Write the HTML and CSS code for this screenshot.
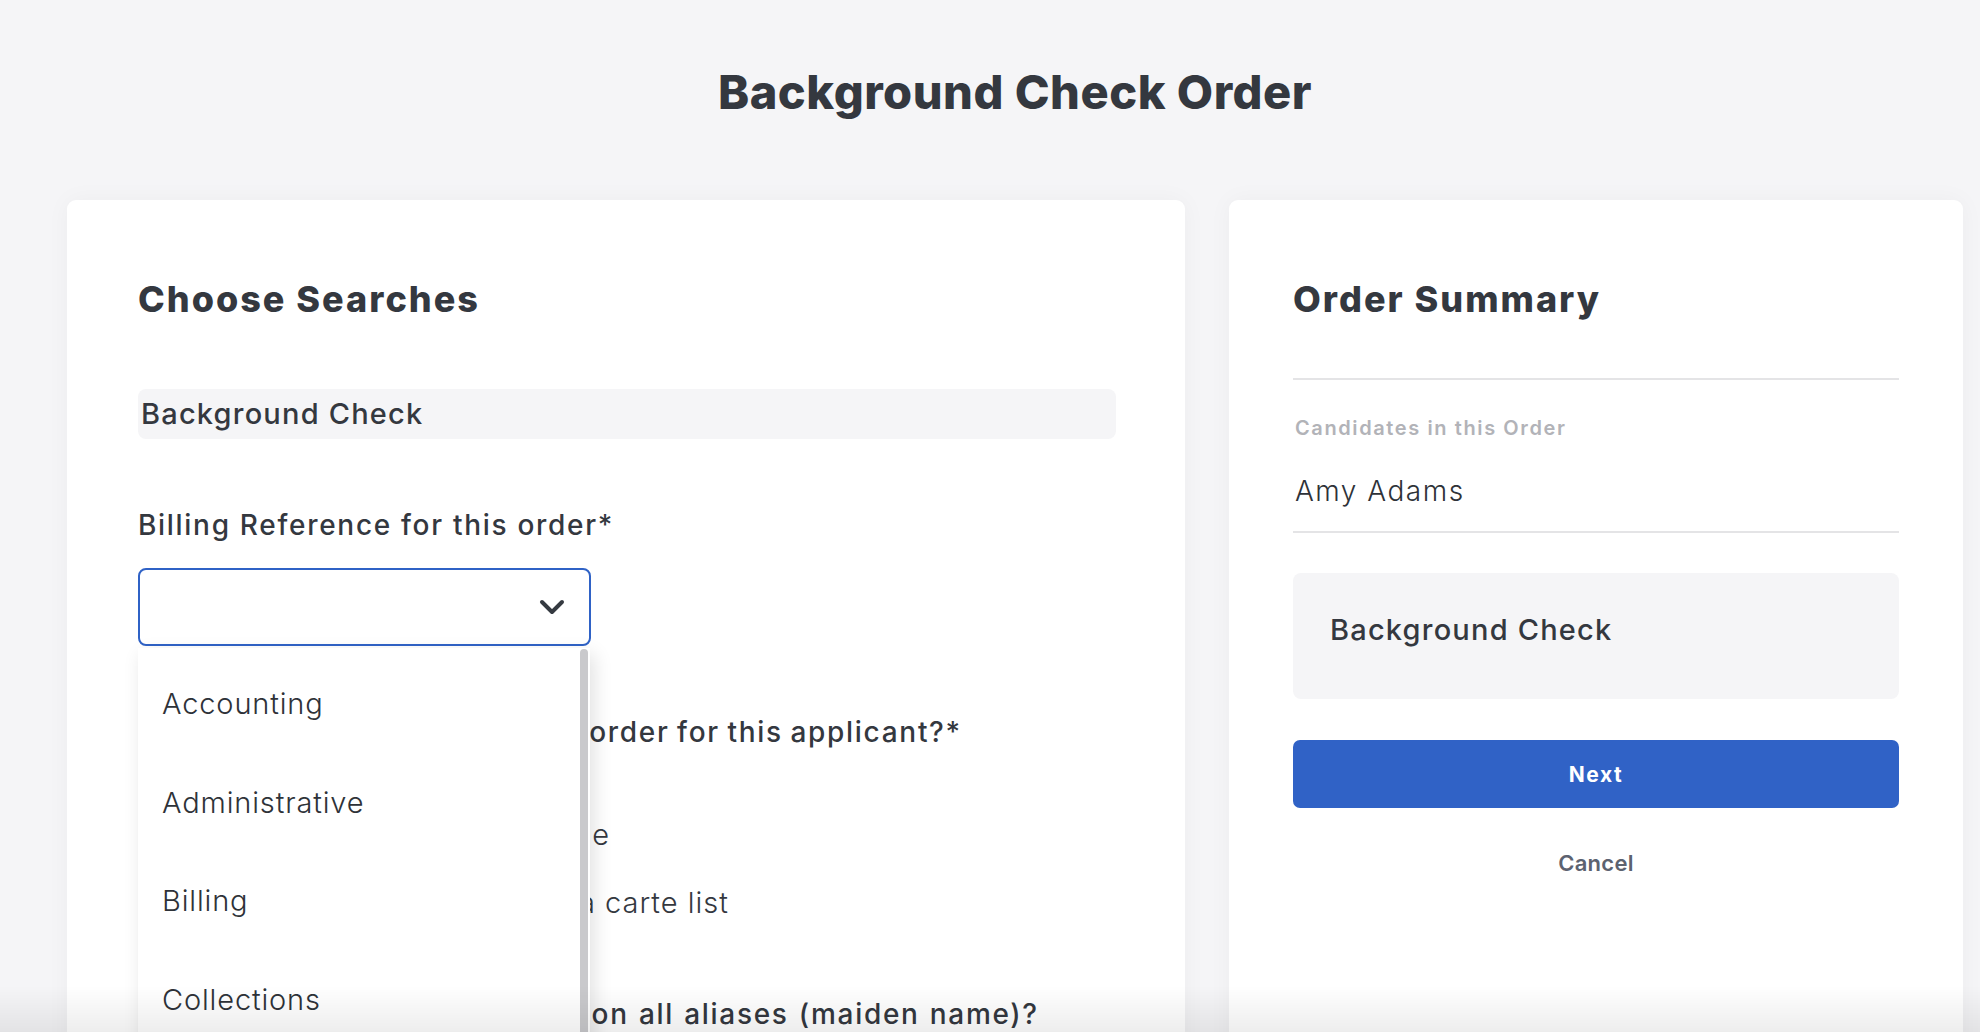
FILE: index.html
```html
<!DOCTYPE html>
<html lang="en">
<head>
    <meta charset="UTF-8">
    <meta name="viewport" content="width=device-width, initial-scale=1.0">
    <title>Background Check Order</title>
    <link rel="stylesheet" href="styles.css">
</head>
<body>

    <div class="page">
        <h1 class="page-title">Background Check Order</h1>

        <div class="layout">
            <section class="card searches">
                <h2 class="card-title">Choose Searches</h2>

                <div class="search-tag">Background Check</div>

                <div class="field">
                    <label class="field-label">Billing Reference for this order*</label>
                    <div class="select-wrap">
                        <div class="select">
                            <svg class="chevron" width="26" height="16" viewBox="0 0 26 16">
                                <polyline points="3,3 13,13 23,3" fill="none" stroke="#353a41" stroke-width="4" stroke-linecap="round" stroke-linejoin="round"/>
                            </svg>
                        </div>
                        <ul class="dropdown">
                            <li>Accounting</li>
                            <li>Administrative</li>
                            <li>Billing</li>
                            <li>Collections</li>
                            <li>Customer Service</li>
                        </ul>
                    </div>
                </div>

                <div class="field order-type">
                    <p class="field-label">How would you like to start an order for this applicant?*</p>
                    <label class="radio"><span class="radio-dot"></span>Order a predefined package</label>
                    <label class="radio"><span class="radio-dot"></span>Pick searches from the à la carte list</label>
                </div>

                <div class="field aliases">
                    <p class="field-label">Would you like to also search on all aliases (maiden name)?</p>
                </div>
            </section>

            <aside class="card summary">
                <h2 class="card-title">Order Summary</h2>
                <hr class="divider first">
                <div class="summary-label">Candidates in this Order</div>
                <div class="candidate">Amy Adams</div>
                <hr class="divider">
                <div class="summary-item">Background Check</div>
                <button class="btn-next">Next</button>
                <a class="cancel" href="#">Cancel</a>
            </aside>
        </div>
    </div>

    <div class="bottom-shade"></div>

</body>
</html>
```

FILE: styles.css
```css
html, body { margin: 0; height: 100%; overflow: hidden; }
body { font-family: Inter, Lato, sans-serif; background-color: #f5f5f7; color: #34383f; }

.page { padding: 62px 17px 0 67px; }
.page-title { margin: 0; font-size: 47px; line-height: 60px; font-weight: 800; letter-spacing: 0.5px; text-align: center; }

.layout { display: grid; grid-template-columns: 1118px 734px; gap: 44px; margin-top: 78px; }
.card { background-color: #fff; border-radius: 9px; box-shadow: 0 0 24px rgba(30, 30, 60, 0.04); min-height: 1000px; box-sizing: border-box; }
.searches { padding: 77px 69px 0 71px; }
.summary { padding: 77px 64px 0 64px; }

.card-title { margin: 0; font-size: 36px; line-height: 44px; font-weight: 800; letter-spacing: 2px; }

.search-tag { margin-top: 68px; height: 50px; line-height: 50px; padding: 0 3px; font-size: 29px; font-weight: 500; letter-spacing: 1.2px; background-color: #f5f5f7; border-radius: 8px; }

.field { margin-top: 68px; }
.field-label { display: block; margin: 0; font-size: 28px; line-height: 36px; font-weight: 500; letter-spacing: 1.7px; }

.select-wrap { position: relative; width: 453px; margin-top: 25px; }
.select { height: 78px; box-sizing: border-box; border: 2px solid #2f62c6; border-radius: 8px; display: flex; align-items: center; justify-content: flex-end; padding-right: 24px; }
.chevron { display: block; }

/* open list of the billing select */
.dropdown { position: absolute; top: 80px; left: 0; width: 452px; height: 420px; margin: 0; padding: 7px 0 0; list-style: none; background-color: #fff; box-shadow: 4px 6px 18px rgba(0, 0, 0, 0.12); z-index: 2; overflow: hidden; }
.dropdown li { padding-left: 24px; font-size: 29px; line-height: 98.7px; font-weight: 300; letter-spacing: 0.85px; color: #2e3238; }
.dropdown::after { content: ""; position: absolute; top: 1px; right: 2px; width: 8px; height: 100%; border-radius: 4px; background-color: #c9c9cc; }

.order-type .field-label { word-spacing: -1.5px; }
.order-type .radio { display: flex; align-items: center; gap: 41px; font-size: 29px; line-height: 36px; font-weight: 300; letter-spacing: 1px; margin-top: 32px; }
.order-type .field-label + .radio { margin-top: 67px; }
.radio-dot { width: 22px; height: 22px; border: 2px solid #8a8e96; border-radius: 50%; }
.aliases { margin-top: 75px; }
.aliases .field-label { word-spacing: 1px; }

.divider { border: none; border-top: 2px solid #e4e4e6; margin: 0; }
.divider.first { margin-top: 57px; }
.summary-label { margin-top: 35px; font-size: 20px; line-height: 26px; font-weight: 600; letter-spacing: 1.6px; color: #b2b3b8; padding-left: 2px; }
.candidate { margin-top: 32px; margin-bottom: 22px; font-size: 28px; line-height: 36px; font-weight: 300; letter-spacing: 1.5px; padding-left: 2px; color: #2e3238; }

.summary-item { margin-top: 40px; height: 126px; box-sizing: border-box; padding: 39px 37px 0; font-size: 29px; line-height: 36px; font-weight: 500; letter-spacing: 1.2px; background-color: #f5f5f7; border-radius: 8px; }

.btn-next { display: block; width: 100%; height: 68px; margin-top: 41px; border: none; border-radius: 7px; background-color: #3062c6; color: #fff; font-family: inherit; font-size: 21px; font-weight: 700; letter-spacing: 1.6px; cursor: pointer; }
.cancel { display: block; margin-top: 41px; text-align: center; font-size: 22px; line-height: 28px; font-weight: 600; letter-spacing: 0.3px; color: #5c6270; text-decoration: none; }

.bottom-shade { position: fixed; left: 0; right: 0; bottom: 0; height: 46px; background: linear-gradient(rgba(0, 0, 0, 0), rgba(0, 0, 0, 0.07)); pointer-events: none; z-index: 5; }
```
